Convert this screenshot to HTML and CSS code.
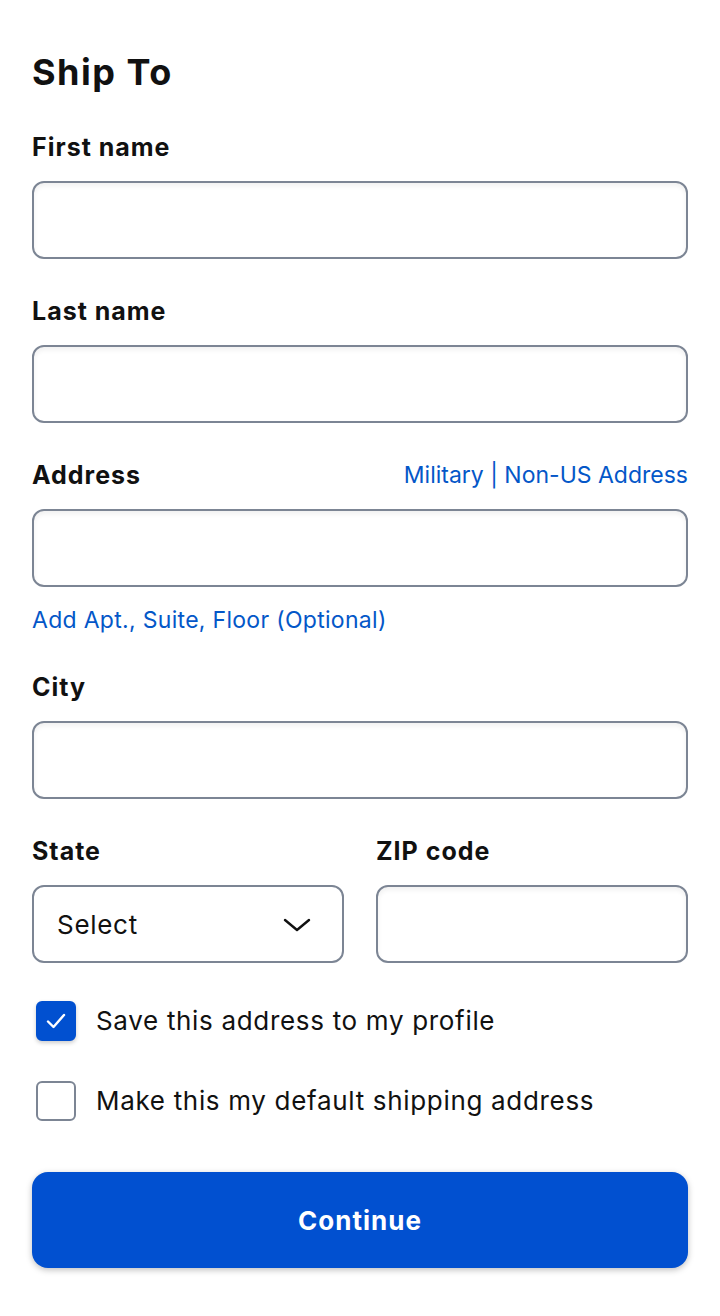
FILE: index.html
```html
<!DOCTYPE html>
<html lang="en">
<head>
<meta charset="utf-8">
<title>Ship To</title>
<link rel="stylesheet" href="styles.css">
</head>
<body>
<main class="page">
  <h1 class="title">Ship To</h1>

  <div class="field">
    <div class="label-row"><label class="label">First name</label></div>
    <div class="input"></div>
  </div>

  <div class="field">
    <div class="label-row"><label class="label">Last name</label></div>
    <div class="input"></div>
  </div>

  <div class="field field-address">
    <div class="label-row">
      <label class="label">Address</label>
      <a class="link link-small">Military | Non-US Address</a>
    </div>
    <div class="input"></div>
    <a class="link link-apt">Add Apt., Suite, Floor (Optional)</a>
  </div>

  <div class="field">
    <div class="label-row"><label class="label">City</label></div>
    <div class="input"></div>
  </div>

  <div class="two-col">
    <div class="field">
      <div class="label-row"><label class="label">State</label></div>
      <div class="input select">
        <span class="select-text">Select</span>
        <svg class="chevron" width="28" height="14" viewBox="0 0 28 14" aria-hidden="true">
          <path d="M2 2 L14 12 L26 2" fill="none" stroke="#111" stroke-width="2.4" stroke-linecap="round" stroke-linejoin="round"/>
        </svg>
      </div>
    </div>
    <div class="field">
      <div class="label-row"><label class="label">ZIP code</label></div>
      <div class="input"></div>
    </div>
  </div>

  <div class="checks">
    <div class="check-row">
      <span class="box-area"><span class="box box-checked">
        <svg width="24" height="20" viewBox="0 0 24 20" aria-hidden="true">
          <path d="M4 10.5 L9.5 16 L20 4" fill="none" stroke="#fff" stroke-width="2.4" stroke-linecap="round" stroke-linejoin="round"/>
        </svg>
      </span></span>
      <span class="check-text">Save this address to my profile</span>
    </div>
    <div class="check-row">
      <span class="box-area"><span class="box"></span></span>
      <span class="check-text">Make this my default shipping address</span>
    </div>
  </div>

  <button class="btn" type="button">Continue</button>
</main>
</body>
</html>
```

FILE: styles.css
```css
* { box-sizing: border-box; }

html, body {
  margin: 0;
  background: #fff;
}

body {
  font-family: Inter, "Noto Sans", "Liberation Sans", sans-serif;
  color: #111;
}

.page {
  padding: 50px 32px 40px;
  display: flex;
  flex-direction: column;
}

.title {
  margin: 0 0 37px;
  font-size: 36px;
  line-height: 44px;
  font-weight: 700;
  letter-spacing: 1.5px;
}

.field {
  display: flex;
  flex-direction: column;
  margin-bottom: 36px;
}

.label-row {
  display: flex;
  justify-content: space-between;
  align-items: center;
  height: 32px;
  margin-bottom: 18px;
}

.label {
  font-size: 25px;
  font-weight: 700;
  line-height: 32px;
  letter-spacing: 1px;
}

.link {
  color: #0457c8;
  font-size: 23px;
  line-height: 32px;
  letter-spacing: 0.3px;
  text-decoration: none;
}

.link-small {
  letter-spacing: 0;
}

.link-apt {
  margin-top: 17px;
}

.field-address {
  margin-bottom: 35px;
}

.input {
  height: 78px;
  border: 2px solid #7c8594;
  border-radius: 12px;
  background: #fff;
  box-shadow: inset 0 3px 5px rgba(0, 0, 0, 0.06);
}

.two-col {
  display: grid;
  grid-template-columns: 1fr 1fr;
  gap: 32px;
}

.two-col .field {
  margin-bottom: 34px;
}

.select {
  display: flex;
  align-items: center;
  justify-content: space-between;
  padding: 0 31px 0 23px;
  box-shadow: none;
}

.select-text {
  font-size: 26px;
  letter-spacing: 0.7px;
}

.chevron {
  display: block;
  margin-top: 2px;
}

.checks {
  display: flex;
  flex-direction: column;
  gap: 32px;
  margin-bottom: 47px;
}

.check-row {
  display: flex;
  align-items: center;
  gap: 16px;
  height: 48px;
}

.box-area {
  width: 48px;
  height: 48px;
  display: flex;
  align-items: center;
  justify-content: center;
  flex-shrink: 0;
}

.box {
  width: 40px;
  height: 40px;
  border: 2px solid #7c8594;
  border-radius: 6px;
  display: flex;
  align-items: center;
  justify-content: center;
  background: #fff;
}

.box-checked {
  background: #0150d0;
  border-color: #0150d0;
  box-shadow: 0 2px 4px rgba(0, 0, 0, 0.2);
}

.check-text {
  font-size: 26px;
  line-height: 32px;
  letter-spacing: 0.68px;
}

.btn {
  height: 96px;
  width: 100%;
  border: none;
  border-radius: 16px;
  background: #0150d0;
  color: #fff;
  font-family: inherit;
  font-size: 26px;
  font-weight: 700;
  letter-spacing: 1px;
  box-shadow: 0 2px 6px rgba(0, 0, 0, 0.25);
}
```
